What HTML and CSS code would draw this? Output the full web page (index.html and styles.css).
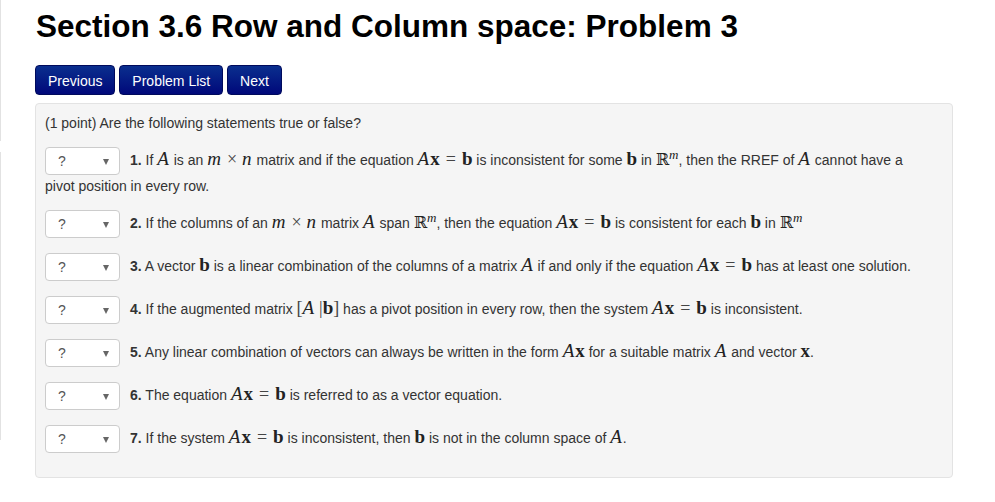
FILE: index.html
```html
<!DOCTYPE html>
<html lang="en">

<head>
    <meta charset="UTF-8">
    <meta name="viewport" content="width=device-width, initial-scale=1.0">
    <title>Section 3.6 Row and Column space: Problem 3</title>
    <link rel="stylesheet" href="styles.css">
</head>

<body>
    <div class="page">
        <div class="rail">
            <div class="rail-top"></div>
            <div class="rail-bottom"></div>
        </div>

        <div class="main">
            <h2 class="title">Section 3.6 Row and Column space: Problem 3</h2>

            <div class="nav">
                <a class="btn">Previous</a>
                <a class="btn">Problem List</a>
                <a class="btn">Next</a>
            </div>

            <div class="problem">
                <p class="item">(1 point) Are the following statements true or false?</p>

                <p class="item">
                    <span class="select">?<span class="caret"></span></span><b>1.</b> If <i class="mi">A</i> is an <i class="mi">m</i><span class="mo bin">&times;</span><i class="mi">n</i> matrix and if the equation <i class="mi">A</i><b class="mb">x</b><span class="mo rel">=</span><b class="mb">b</b> is inconsistent for some <b class="mb">b</b> in <span class="mr">&#8477;<sup><i>m</i></sup></span>, then the RREF of <i class="mi">A</i> cannot have a pivot position in every row.
                </p>

                <p class="item">
                    <span class="select">?<span class="caret"></span></span><b>2.</b> If the columns of an <i class="mi">m</i><span class="mo bin">&times;</span><i class="mi">n</i> matrix <i class="mi">A</i> span <span class="mr">&#8477;<sup><i>m</i></sup></span>, then the equation <i class="mi">A</i><b class="mb">x</b><span class="mo rel">=</span><b class="mb">b</b> is consistent for each <b class="mb">b</b> in <span class="mr">&#8477;<sup><i>m</i></sup></span>
                </p>

                <p class="item">
                    <span class="select">?<span class="caret"></span></span><b>3.</b> A vector <b class="mb">b</b> is a linear combination of the columns of a matrix <i class="mi">A</i> if and only if the equation <i class="mi">A</i><b class="mb">x</b><span class="mo rel">=</span><b class="mb">b</b> has at least one solution.
                </p>

                <p class="item">
                    <span class="select">?<span class="caret"></span></span><b>4.</b> If the augmented matrix <span class="mo">[</span><i class="mi">A</i> <span class="mo">|</span><b class="mb">b</b><span class="mo">]</span> has a pivot position in every row, then the system <i class="mi">A</i><b class="mb">x</b><span class="mo rel">=</span><b class="mb">b</b> is inconsistent.
                </p>

                <p class="item">
                    <span class="select">?<span class="caret"></span></span><b>5.</b> Any linear combination of vectors can always be written in the form <i class="mi">A</i><b class="mb">x</b> for a suitable matrix <i class="mi">A</i> and vector <b class="mb">x</b>.
                </p>

                <p class="item">
                    <span class="select">?<span class="caret"></span></span><b>6.</b> The equation <i class="mi">A</i><b class="mb">x</b><span class="mo rel">=</span><b class="mb">b</b> is referred to as a vector equation.
                </p>

                <p class="item">
                    <span class="select">?<span class="caret"></span></span><b>7.</b> If the system <i class="mi">A</i><b class="mb">x</b><span class="mo rel">=</span><b class="mb">b</b> is inconsistent, then <b class="mb">b</b> is not in the column space of <i class="mi">A</i>.
                </p>
            </div>
        </div>
    </div>
</body>

</html>
```

FILE: styles.css
```css
body {
    margin: 0;
    background: #fff;
    color: #333;
    font-family: "Liberation Sans", Arial, sans-serif;
    font-size: 14px;
    line-height: 20px;
}

.page {
    display: flex;
}

.rail {
    width: 2px;
    flex: none;
}

.rail-top {
    height: 141px;
    border-left: 1px solid #e2e2e2;
}

.rail-bottom {
    height: 288px;
    margin-top: 11px;
    border-left: 1px solid #e2e2e2;
}

.main {
    padding-left: 33px;
    width: 918px;
}

.title {
    margin: 8px 0 0 1px;
    font-size: 31.5px;
    line-height: 36px;
    font-weight: bold;
    color: #000;
}

.nav {
    margin-top: 21px;
    height: 30px;
}

.btn {
    display: inline-block;
    height: 30px;
    padding: 0 12px;
    line-height: 30px;
    color: #fff;
    font-size: 14px;
    border-radius: 4px;
    border: 1px solid #000a5c;
    box-sizing: border-box;
    background: linear-gradient(#0a2f8e, #00087a);
    cursor: pointer;
}

.problem {
    margin-top: 8px;
    padding: 9px 22px 10px 9px;
    background: #f5f5f5;
    border: 1px solid #e3e3e3;
    border-radius: 4px;
}

.item {
    margin: 0 0 13px;
}

.select {
    display: inline-block;
    position: relative;
    width: 75px;
    height: 28px;
    margin: 1px 10px 1px 0;
    padding-left: 12px;
    box-sizing: border-box;
    background: #fff;
    border: 1px solid #ccc;
    border-radius: 4px;
    line-height: 26px;
    color: #555;
    vertical-align: middle;
}

.caret {
    position: absolute;
    right: 10px;
    top: 11px;
    width: 0;
    height: 0;
    border-left: 3px solid transparent;
    border-right: 3px solid transparent;
    border-top: 6px solid #666;
}

.mi {
    font-family: "Liberation Serif", "Times New Roman", serif;
    font-style: italic;
    font-size: 19px;
    color: #222;
    padding-right: 1px;
}

.mb {
    font-family: "Liberation Serif", "Times New Roman", serif;
    font-weight: bold;
    font-size: 19px;
    color: #222;
}

.mo {
    font-family: "Liberation Serif", "Times New Roman", serif;
    font-size: 18px;
    color: #444;
}

.mo.bin {
    margin: 0 5px;
}

.mo.rel {
    margin: 0 6px;
}

.mr {
    font-family: "DejaVu Serif", serif;
    font-size: 16px;
    color: #222;
}

.mr sup {
    font-family: "Liberation Serif", serif;
    font-size: 13px;
    line-height: 0;
}
```
